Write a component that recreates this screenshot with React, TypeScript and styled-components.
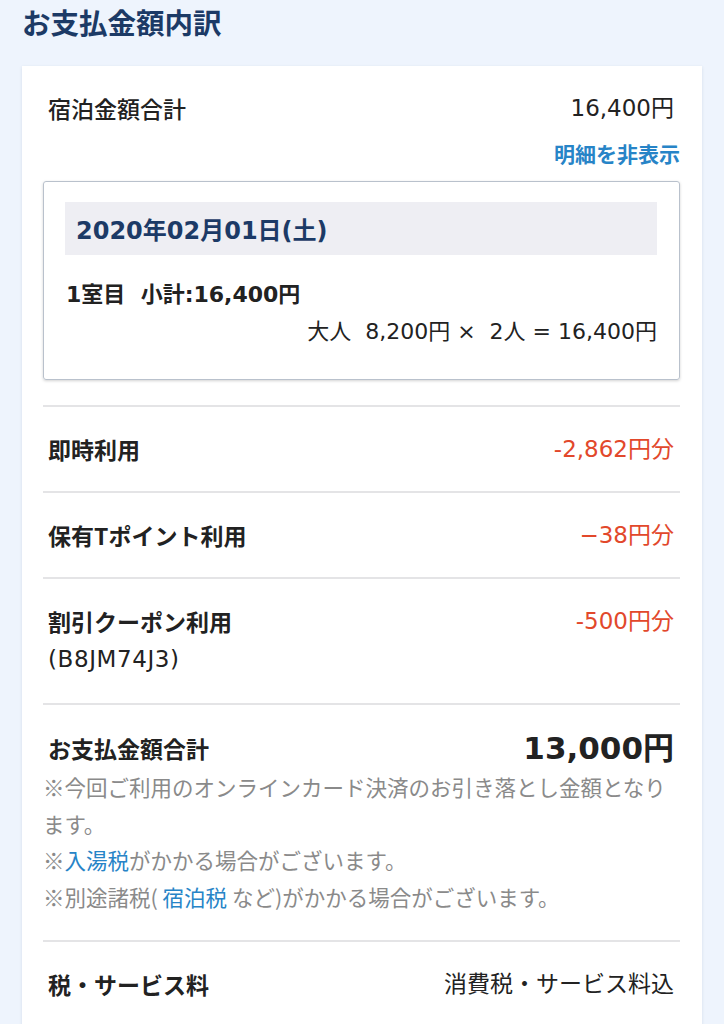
import React from 'react';
import styled, {createGlobalStyle} from 'styled-components';

const latin = `"DejaVu Sans", "Noto Sans CJK JP", sans-serif`;
const cjk = `"Noto Sans CJK JP", "Noto Sans", sans-serif`;

const GlobalStyle = createGlobalStyle`
    html, body {
        margin: 0;
        padding: 0;
        background: #eef4fd;
    }

    body {
        font-family: ${latin};
        color: #222;
        -webkit-font-smoothing: antialiased;
    }
`;

const Page = styled.div`
    padding: 0 22px;
`;

const Title = styled.h2`
    margin: 0;
    font-family: ${cjk};
    font-size: 28.5px;
    line-height: 44px;
    font-weight: 700;
    color: #1c3a66;
`;

const Card = styled.section`
    margin-top: 22px;
    background: #fff;
    padding: 0 22px 0 21px;
    box-shadow: 0 1px 3px rgba(40, 60, 90, 0.12);
`;

const Summary = styled.div`
    padding: 26px 0 25px;
`;

const Line = styled.div<{$weight?: number; $tall?: boolean}>`
    display: flex;
    justify-content: space-between;
    align-items: center;
    height: ${({$tall}) => ($tall ? 42 : 32)}px;
    padding: 0 6px 0 5px;
    font-weight: ${({$weight}) => $weight ?? 700};
    white-space: nowrap;
`;

const Label = styled.span`
    font-family: ${cjk};
    font-size: 23px;
    line-height: 1;
`;

const Value = styled.span<{$tone?: 'red' | 'plain'; $big?: boolean}>`
    font-weight: ${({$big}) => ($big ? 700 : 400)};
    font-size: ${({$big}) => ($big ? '31px' : '23px')};
    line-height: 1;
    color: ${({$tone}) => ($tone === 'red' ? '#e2482b' : '#222')};
`;

const Toggle = styled.button`
    display: block;
    margin: 14px 0 0 auto;
    padding: 0;
    border: 0;
    background: none;
    font-family: ${cjk};
    font-size: 21px;
    line-height: 30px;
    font-weight: 700;
    color: #2784c7;
    cursor: pointer;
`;

const DayBox = styled.div`
    margin-top: 13px;
    border: 1px solid #b9c1cc;
    border-radius: 3px;
    box-shadow: 0 1px 3px rgba(0, 0, 0, 0.18);
    padding: 20px 22px 34px 21px;
`;

const DateBand = styled.div`
    background: #eeeef3;
    padding: 0 11px;
    height: 53px;
    display: flex;
    align-items: center;
    font-size: 24px;
    font-weight: 700;
    color: #1c3a66;
`;

const RoomLine = styled.div`
    display: flex;
    align-items: center;
    height: 32px;
    margin-top: 21px;
    padding-left: 1px;
    font-size: 22px;
    font-weight: 700;
    white-space: pre;
`;

const PriceLine = styled.div`
    display: flex;
    align-items: center;
    justify-content: flex-end;
    height: 32px;
    margin-top: 5px;
    font-size: 22px;
    white-space: pre;
`;

const Row = styled.div<{$top?: number; $bottom?: number}>`
    border-top: 2px solid #e4e4e6;
    padding: ${({$top}) => $top ?? 26}px 0 ${({$bottom}) => $bottom ?? 26}px;
`;

const SubText = styled.div`
    display: flex;
    align-items: center;
    height: 38px;
    margin-top: 3px;
    padding-left: 5px;
    font-size: 23px;
    letter-spacing: 0.6px;
`;

const Notes = styled.div`
    font-family: ${cjk};
    font-size: 21.5px;
    line-height: 36.5px;
    color: #8a8a8a;
`;

const Link = styled.a`
    color: #2784c7;
    text-decoration: none;
`;

export default function App() {
    return (
        <>
            <GlobalStyle />
            <Page>
                <Title>お支払金額内訳</Title>
                <Card>
                    <Summary>
                        <Line $weight={500}>
                            <Label>宿泊金額合計</Label>
                            <Value>16,400円</Value>
                        </Line>
                        <Toggle type="button">明細を非表示</Toggle>
                        <DayBox>
                            <DateBand>2020年02月01日(土)</DateBand>
                            <RoomLine>1室目  小計:16,400円</RoomLine>
                            <PriceLine>大人  8,200円 ×  2人 = 16,400円</PriceLine>
                        </DayBox>
                    </Summary>
                    <Row>
                        <Line>
                            <Label>即時利用</Label>
                            <Value $tone="red">-2,862円分</Value>
                        </Line>
                    </Row>
                    <Row>
                        <Line>
                            <Label>保有Tポイント利用</Label>
                            <Value $tone="red">−38円分</Value>
                        </Line>
                    </Row>
                    <Row $bottom={25}>
                        <Line>
                            <Label>割引クーポン利用</Label>
                            <Value $tone="red">-500円分</Value>
                        </Line>
                        <SubText>(B8JM74J3)</SubText>
                    </Row>
                    <Row $top={22} $bottom={25}>
                        <Line $tall>
                            <Label>お支払金額合計</Label>
                            <Value $big>13,000円</Value>
                        </Line>
                        <Notes>
                            ※今回ご利用のオンラインカード決済のお引き落とし金額となります。
                            <br />
                            ※<Link href="#">入湯税</Link>がかかる場合がございます。
                            <br />
                            ※別途諸税( <Link href="#">宿泊税</Link> など)がかかる場合がございます。
                        </Notes>
                    </Row>
                    <Row $top={26}>
                        <Line>
                            <Label>税・サービス料</Label>
                            <Value>消費税・サービス料込</Value>
                        </Line>
                    </Row>
                </Card>
            </Page>
        </>
    );
}
